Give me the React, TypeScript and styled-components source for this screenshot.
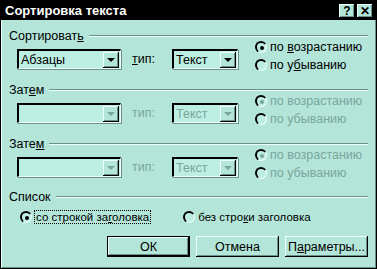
import React from "react";
import styled, { createGlobalStyle } from "styled-components";

const FACE = "#b3e6d9";
const FIELD = "#bdeee2";
const SHADOW = "#6b918a";
const LIGHT = "#ecfff9";
const DISABLED = "#7aa59d";

const GlobalStyle = createGlobalStyle`
  html, body {
    margin: 0;
    padding: 0;
    background: ${FACE};
  }
  body {
    font-family: "Liberation Sans", Arial, sans-serif;
    font-size: 12px;
  }
`;

const Dialog = styled.div`
  width: 377px;
  height: 269px;
  box-sizing: border-box;
  background: ${FACE};
  border: 1px solid #000;
  box-shadow: inset 1px 1px 0 ${LIGHT}, inset -1px -1px 0 ${SHADOW};
  display: flex;
  flex-direction: column;
  overflow: hidden;
`;

const TitleBar = styled.div`
  height: 19px;
  background: #000;
  color: #fff;
  display: flex;
  align-items: center;
  padding: 0 3px 0 4px;
  font-weight: bold;
  font-size: 13px;
`;

const TitleText = styled.div`
  flex: 1;
`;

const CaptionButton = styled.div<{ $gap?: number }>`
  width: 16px;
  height: 14px;
  box-sizing: border-box;
  background: ${FACE};
  color: #000;
  font-size: 12px;
  font-weight: bold;
  display: flex;
  align-items: center;
  justify-content: center;
  box-shadow: inset -1px -1px 0 #000, inset 1px 1px 0 ${LIGHT},
    inset -2px -2px 0 ${SHADOW};
  margin-left: ${(p) => p.$gap ?? 0}px;
`;

const Body = styled.div`
  flex: 1;
  display: flex;
  flex-direction: column;
  padding: 9px 7px 0 7px;
`;

const Group = styled.div<{ $mb: number }>`
  display: flex;
  flex-direction: column;
  margin-bottom: ${(p) => p.$mb}px;
`;

const GroupHeader = styled.div`
  display: flex;
  align-items: center;
  height: 13px;
  gap: 5px;
  padding-left: 1px;
  font-size: 12.5px;
`;

const Line = styled.div`
  flex: 1;
  height: 0;
  border-top: 1px solid ${SHADOW};
  border-bottom: 1px solid ${LIGHT};
  margin-right: 1px;
`;

const Row = styled.div`
  display: flex;
  align-items: center;
  padding-left: 9px;
  height: 32px;
`;

const Combo = styled.div<{ $w: number }>`
  width: ${(p) => p.$w}px;
  height: 20px;
  box-sizing: border-box;
  background: ${FIELD};
  display: flex;
  align-items: center;
  border-top: 2px solid #000;
  border-left: 2px solid #000;
  border-bottom: 1px solid ${LIGHT};
  border-right: 1px solid ${LIGHT};
  box-shadow: 1px 1px 0 ${SHADOW};
  padding: 0 1px 0 2px;
  margin-top: 2px;
`;

const ComboText = styled.div<{ $disabled?: boolean }>`
  flex: 1;
  color: ${(p) => (p.$disabled ? DISABLED : "#000")};
  font-size: 12.5px;
  white-space: nowrap;
`;

const DropButton = styled.div`
  width: 16px;
  height: 16px;
  box-sizing: border-box;
  background: ${FACE};
  box-shadow: inset -1px -1px 0 #000, inset 1px 1px 0 ${LIGHT},
    inset -2px -2px 0 ${SHADOW};
  display: flex;
  align-items: center;
  justify-content: center;
`;

const Arrow = styled.div<{ $disabled?: boolean }>`
  width: 0;
  height: 0;
  border-left: 4px solid transparent;
  border-right: 4px solid transparent;
  border-top: 4px solid ${(p) => (p.$disabled ? DISABLED : "#000")};
`;

const TypeLabel = styled.div<{ $disabled?: boolean }>`
  width: 40px;
  margin-left: 11px;
  padding-top: 2px;
  color: ${(p) => (p.$disabled ? DISABLED : "#000")};
  font-size: 12.5px;
`;

const RadioColumn = styled.div`
  display: flex;
  flex-direction: column;
  gap: 3px;
  margin-left: 17px;
  margin-top: -4px;
`;

const RadioLine = styled.div<{ $disabled?: boolean; $ml?: number; $size?: number }>`
  display: flex;
  align-items: center;
  gap: 3px;
  height: 15px;
  margin-left: ${(p) => p.$ml ?? 0}px;
  color: ${(p) => (p.$disabled ? DISABLED : "#000")};
  font-size: ${(p) => p.$size ?? 12.5}px;
  white-space: nowrap;
`;

const RadioCircle = styled.div<{ $checked?: boolean; $disabled?: boolean }>`
  width: 12px;
  height: 12px;
  box-sizing: border-box;
  border-radius: 50%;
  background: ${FIELD};
  border-top: 2px solid #000;
  border-left: 2px solid #000;
  border-right: 1px solid ${LIGHT};
  border-bottom: 1px solid ${LIGHT};
  display: flex;
  align-items: center;
  justify-content: center;
  flex-shrink: 0;
  &::after {
    content: "";
    display: ${(p) => (p.$checked ? "block" : "none")};
    width: 4px;
    height: 4px;
    border-radius: 50%;
    background: ${(p) => (p.$disabled ? DISABLED : "#000")};
  }
`;

const Focus = styled.span`
  outline: 1px dotted #000;
  padding: 0 1px;
`;

const ListRow = styled.div`
  display: flex;
  align-items: center;
  padding-left: 12px;
  height: 28px;
`;

const ButtonRow = styled.div`
  display: flex;
  justify-content: flex-end;
  gap: 6px;
  margin-top: 5px;
  padding-right: 1px;
`;

const Button = styled.div`
  width: 83px;
  height: 21px;
  box-sizing: border-box;
  display: flex;
  align-items: center;
  justify-content: center;
  background: ${FACE};
  box-shadow: inset -1px -1px 0 #000, inset 1px 1px 0 ${LIGHT},
    inset -2px -2px 0 ${SHADOW};
  font-size: 12.5px;
`;

const DefaultButton = styled(Button)`
  border: 1px solid #000;
`;

type SortGroupProps = {
  title: React.ReactNode;
  value: string;
  disabled?: boolean;
  mb: number;
};

const SortGroup: React.FC<SortGroupProps> = ({ title, value, disabled, mb }) => {
  return (
    <Group $mb={mb}>
      <GroupHeader>
        <span>{title}</span>
        <Line />
      </GroupHeader>
      <Row>
        <Combo $w={104}>
          <ComboText>{value}</ComboText>
          <DropButton>
            <Arrow $disabled={disabled} />
          </DropButton>
        </Combo>
        <TypeLabel $disabled={disabled}>
          {disabled ? "тип:" : <><u>т</u>ип:</>}
        </TypeLabel>
        <Combo $w={66}>
          <ComboText $disabled={disabled}>Текст</ComboText>
          <DropButton>
            <Arrow $disabled={disabled} />
          </DropButton>
        </Combo>
        <RadioColumn>
          <RadioLine $disabled={disabled}>
            <RadioCircle $checked $disabled={disabled} />
            <span>{disabled ? "по возрастанию" : <>по <u>в</u>озрастанию</>}</span>
          </RadioLine>
          <RadioLine $disabled={disabled}>
            <RadioCircle $disabled={disabled} />
            <span>{disabled ? "по убыванию" : <>по у<u>б</u>ыванию</>}</span>
          </RadioLine>
        </RadioColumn>
      </Row>
    </Group>
  );
};

export default function App() {
  return (
    <>
      <GlobalStyle />
      <Dialog>
        <TitleBar>
          <TitleText>Сортировка текста</TitleText>
          <CaptionButton>?</CaptionButton>
          <CaptionButton $gap={2}>✕</CaptionButton>
        </TitleBar>
        <Body>
          <SortGroup title={<>Сортироват<u>ь</u></>} value="Абзацы" mb={9} />
          <SortGroup title={<>Зат<u>е</u>м</>} value="" disabled mb={9} />
          <SortGroup title={<>Зате<u>м</u></>} value="" disabled mb={8} />
          <Group $mb={0}>
            <GroupHeader>
              <span>Список</span>
              <Line />
            </GroupHeader>
            <ListRow>
              <RadioLine $size={11.5}>
                <RadioCircle $checked />
                <Focus>
                  со строкой за<u>г</u>оловка
                </Focus>
              </RadioLine>
              <RadioLine $ml={33} $size={11.5}>
                <RadioCircle />
                <span>
                  без стро<u>к</u>и заголовка
                </span>
              </RadioLine>
            </ListRow>
          </Group>
          <ButtonRow>
            <DefaultButton>ОК</DefaultButton>
            <Button>Отмена</Button>
            <Button>
              <span>
                П<u>а</u>раметры...
              </span>
            </Button>
          </ButtonRow>
        </Body>
      </Dialog>
    </>
  );
}
